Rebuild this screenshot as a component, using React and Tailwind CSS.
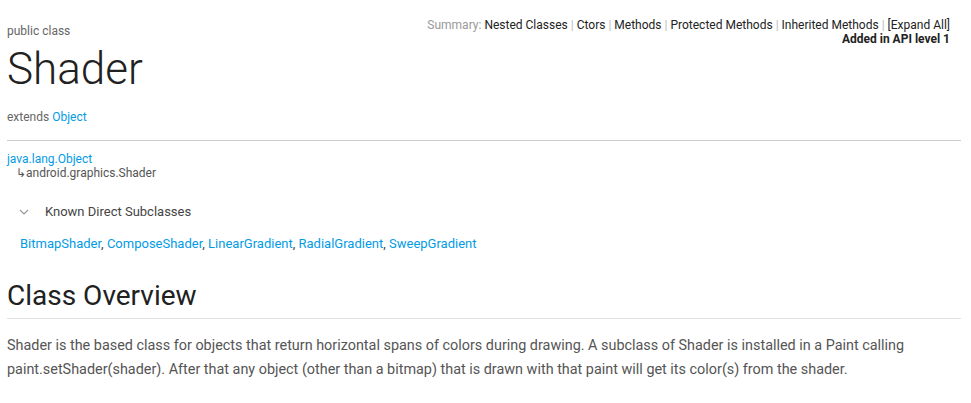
import React from 'react';

const Sep = () => <span className="text-[#bbb] mx-[3px]">|</span>;

export default function App() {
  const subclasses = ['BitmapShader', 'ComposeShader', 'LinearGradient', 'RadialGradient', 'SweepGradient'];

  return (
    <div className="w-[971px] h-[403px] bg-white overflow-hidden font-['Roboto',sans-serif] text-[#222]">
      <div className="pl-[7px] pr-[10px]">
        {/* Header */}
        <div className="flex justify-between">
          <div className="pt-[22px] text-[12px] text-[#666]">public class</div>
          <div className="pt-[18px] pr-[11px] text-right text-[12px] leading-[14px]">
            <div>
              <span className="text-[#999]">Summary: </span>
              <span>Nested Classes</span><Sep />
              <span>Ctors</span><Sep />
              <span>Methods</span><Sep />
              <span>Protected Methods</span><Sep />
              <span>Inherited Methods</span><Sep />
              <span>[Expand All]</span>
            </div>
            <div className="font-bold">Added in API level 1</div>
          </div>
        </div>
        <h1 className="text-[44px] font-light leading-[50px] mt-[-2px] text-[#212121]">Shader</h1>
        <div className="mt-[14px] text-[12px] text-[#666]">
          extends <span className="text-[#039be5]">Object</span>
        </div>
        <div className="mt-[14px] border-t border-[#ccc]" />

        {/* Inheritance */}
        <div className="mt-[11px] text-[12px] leading-[14px]">
          <div className="text-[#039be5]">java.lang.Object</div>
          <div className="pl-[9px] text-[#555]">↳android.graphics.Shader</div>
        </div>

        <div className="mt-[22px] flex items-center pl-[12px] text-[13px] text-[#444]">
          <svg width="10" height="6" viewBox="0 0 10 6" className="mr-[16px]">
            <path d="M1 1l4 4 4-4" fill="none" stroke="#999" strokeWidth="1.2" />
          </svg>
          Known Direct Subclasses
        </div>
        <div className="mt-[12px] pl-[13px] text-[13px] text-[#444]">
          {subclasses.map((s, i) => (
            <span key={s}>
              <span className="text-[#039be5]">{s}</span>
              {i < subclasses.length - 1 && ', '}
            </span>
          ))}
        </div>

        {/* Overview */}
        <h2 className="mt-[27px] text-[28px] leading-[32px] text-[#212121]">Class Overview</h2>
        <div className="mt-[6px] border-t border-[#e0e0e0]" />
        <p className="mt-[15px] text-[14.4px] leading-[24px] text-[#555]">
          Shader is the based class for objects that return horizontal spans of colors during drawing. A subclass of Shader is installed in a Paint calling paint.setShader(shader). After that any object (other than a bitmap) that is drawn with that paint will get its color(s) from the shader.
        </p>
      </div>
    </div>
  );
}
